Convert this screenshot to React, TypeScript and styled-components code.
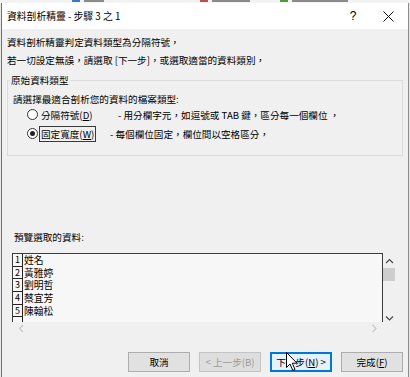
import React from "react";
import styled, { createGlobalStyle } from "styled-components";

const GlobalStyle = createGlobalStyle`
  html, body {
    margin: 0;
    padding: 0;
    background: #e6e6e6;
  }
  body {
    font-family: "Noto Sans CJK TC", "Noto Sans", sans-serif;
    color: #000;
  }
`;

const Screen = styled.div`
  position: relative;
  width: 410px;
  height: 377px;
  overflow: hidden;
  display: flex;
  flex-direction: column;
  background: #e9e9e9;
`;

// bottom edge of the Excel ribbon behind the dialog, only glyph feet show
const Ribbon = styled.div`
  height: 3px;
  display: flex;
  align-items: flex-start;
  background: #f3f3f3;
`;

const RibbonMark = styled.i<{ $left: number; $w: number; $color?: string }>`
  width: ${(p) => p.$w}px;
  height: 2px;
  margin-left: ${(p) => p.$left}px;
  background: ${(p) => p.$color ?? "#8a8a8a"};
`;

const Dialog = styled.div`
  flex: 1;
  display: flex;
  flex-direction: column;
  margin: 0 1px;
  border-left: 1px solid #707070;
  border-right: 1px solid #8a8a8a;
  background: #f0f0f0;
  font-size: 9.6px;
`;

const TitleBar = styled.div`
  height: 26px;
  display: flex;
  align-items: center;
  padding-left: 5px;
  background: #fff;
`;

const Title = styled.span`
  flex: 1;
  font-size: 9.8px;
`;

const CaptionButton = styled.span<{ $w: number }>`
  width: ${(p) => p.$w}px;
  height: 26px;
  display: flex;
  align-items: center;
  justify-content: center;
  font-family: "Liberation Sans", sans-serif;
  font-size: 12px;
`;

const Body = styled.div`
  flex: 1;
  display: flex;
  flex-direction: column;
  padding-top: 4px;
`;

const Line = styled.div`
  padding-left: 5px;
  line-height: 18px;
`;

const Group = styled.fieldset`
  margin: 4px 5px 0 5px;
  padding: 0 0 13px 0;
  min-width: 0;
  border: 1px solid #dcdcdc;
`;

const Legend = styled.legend`
  margin-left: 2px;
  padding: 0 1px;
  line-height: 14px;
`;

const Prompt = styled.div`
  margin-top: 5px;
  padding-left: 5px;
  line-height: 14px;
`;

const RadioRow = styled.div<{ $top: number }>`
  display: flex;
  align-items: center;
  height: 17px;
  margin-top: ${(p) => p.$top}px;
  padding-left: 19px;
`;

const RadioCircle = styled.span<{ $checked?: boolean }>`
  box-sizing: border-box;
  width: 11px;
  height: 11px;
  border: 1px solid #333;
  border-radius: 50%;
  background: #fff;
  display: flex;
  align-items: center;
  justify-content: center;

  &::after {
    content: "";
    width: 5px;
    height: 5px;
    border-radius: 50%;
    background: ${(p) => (p.$checked ? "#222" : "transparent")};
  }
`;

const RadioLabel = styled.span<{ $focused?: boolean }>`
  box-sizing: border-box;
  width: 57px;
  height: 16px;
  margin-left: 1px;
  padding: 0 1px;
  line-height: 14px;
  border: 1px solid ${(p) => (p.$focused ? "#3a3a3a" : "transparent")};
  white-space: nowrap;
`;

const Description = styled.span<{ $gap: number }>`
  margin-left: ${(p) => p.$gap}px;
  white-space: nowrap;
`;

const Key = styled.span`
  text-decoration: underline;
`;

const PreviewLabel = styled.div`
  margin-top: 74px;
  padding-left: 12px;
  line-height: 14px;
`;

const Preview = styled.div`
  margin: 9px 0 0 10px;
  display: grid;
  grid-template-columns: 371px 13px;
  grid-template-rows: 69px 12px;
`;

const Sheet = styled.div`
  border: 1px solid #3c3c3c;
  border-bottom: none;
  background: #f7f7f7;
  overflow: hidden;
`;

const SheetRow = styled.div`
  display: flex;
  height: 12.7px;
`;

const RowNumber = styled.span`
  box-sizing: border-box;
  width: 10px;
  border-right: 1px solid #222;
  border-bottom: 1px solid #222;
  font-size: 9px;
  line-height: 12px;
  text-align: center;
`;

const Cell = styled.span`
  padding-left: 1px;
  font-size: 9.8px;
  line-height: 12.7px;
`;

const VScroll = styled.div`
  display: flex;
  flex-direction: column;
  align-items: center;
  padding-top: 5px;
`;

const Thumb = styled.div`
  width: 12px;
  height: 13px;
  margin: 3px 0 0 -1px;
  background: #cdcdcd;
`;

const Spacer = styled.div`
  flex: 1;
`;

const HScroll = styled.div`
  display: flex;
  justify-content: space-between;
  align-items: center;
  padding: 0 5px 0 6px;
`;

const Footer = styled.div`
  margin-top: auto;
  display: flex;
  justify-content: flex-end;
  gap: 9px;
  padding: 0 5px 5px 0;
`;

const Button = styled.span<{ $variant?: "default" | "disabled" | "hover" }>`
  box-sizing: border-box;
  width: 62px;
  height: 20px;
  display: flex;
  align-items: center;
  justify-content: center;
  border: 1px solid
    ${(p) =>
      p.$variant === "hover" ? "#0078d7" : p.$variant === "disabled" ? "#c4c4c4" : "#adadad"};
  box-shadow: ${(p) => (p.$variant === "hover" ? "inset 0 0 0 1px #0078d7" : "none")};
  background: ${(p) =>
    p.$variant === "hover" ? "#e5f1fb" : p.$variant === "disabled" ? "#dedede" : "#e1e1e1"};
  color: ${(p) => (p.$variant === "disabled" ? "#9a9a9a" : "#000")};
  white-space: nowrap;
`;

const Cursor = styled.svg`
  position: absolute;
  left: 286px;
  top: 352px;
`;

const Chevron = ({ dir, color = "#444" }: { dir: "up" | "down" | "left" | "right"; color?: string }) => {
  const d = {
    up: "M1 5 L4.5 1.5 L8 5",
    down: "M1 1.5 L4.5 5 L8 1.5",
    left: "M5 1 L1.5 4.5 L5 8",
    right: "M1.5 1 L5 4.5 L1.5 8",
  }[dir];
  const vertical = dir === "up" || dir === "down";
  return (
    <svg width={vertical ? 9 : 7} height={vertical ? 7 : 9}>
      <path d={d} fill="none" stroke={color} strokeWidth="1.1" />
    </svg>
  );
};

const names = ["姓名", "黃雅婷", "劉明哲", "蔡宜芳", "陳翰松", ""];

export default function App() {
  return (
    <>
      <GlobalStyle />
      <Screen>
        <Ribbon>
          <RibbonMark $left={72} $w={8} $color="#3a78c4" />
          <RibbonMark $left={4} $w={20} />
          <RibbonMark $left={96} $w={8} $color="#c0504d" />
          <RibbonMark $left={4} $w={38} />
          <RibbonMark $left={30} $w={8} $color="#4f9a3a" />
          <RibbonMark $left={4} $w={56} />
        </Ribbon>
        <Dialog>
          <TitleBar>
            <Title>資料剖析精靈 - 步驟 3 之 1</Title>
            <CaptionButton $w={30}>?</CaptionButton>
            <CaptionButton $w={40}>
              <svg width="11" height="11">
                <path d="M0.5 0.5 L10.5 10.5 M10.5 0.5 L0.5 10.5" stroke="#111" strokeWidth="1" />
              </svg>
            </CaptionButton>
          </TitleBar>
          <Body>
            <Line>資料剖析精靈判定資料類型為分隔符號，</Line>
            <Line>若一切設定無誤，請選取 [下一步]，或選取適當的資料類別，</Line>
            <Group>
              <Legend>原始資料類型</Legend>
              <Prompt>請選擇最適合剖析您的資料的檔案類型:</Prompt>
              <RadioRow $top={0}>
                <RadioCircle />
                <RadioLabel>
                  分隔符號(<Key>D</Key>)
                </RadioLabel>
                <Description $gap={22}>- 用分欄字元，如逗號或 TAB 鍵，區分每一個欄位 ，</Description>
              </RadioRow>
              <RadioRow $top={2}>
                <RadioCircle $checked />
                <RadioLabel $focused>
                  固定寬度(<Key>W</Key>)
                </RadioLabel>
                <Description $gap={14}>- 每個欄位固定，欄位間以空格區分，</Description>
              </RadioRow>
            </Group>
            <PreviewLabel>預覽選取的資料:</PreviewLabel>
            <Preview>
              <Sheet>
                {names.map((name, i) => (
                  <SheetRow key={i}>
                    <RowNumber>{i < 5 ? i + 1 : ""}</RowNumber>
                    <Cell>{name}</Cell>
                  </SheetRow>
                ))}
              </Sheet>
              <VScroll>
                <Chevron dir="up" />
                <Thumb />
                <Spacer />
                <Chevron dir="down" />
              </VScroll>
              <HScroll>
                <Chevron dir="left" color="#c6c6c6" />
                <Chevron dir="right" color="#c6c6c6" />
              </HScroll>
            </Preview>
            <Footer>
              <Button>取消</Button>
              <Button $variant="disabled">&lt; 上一步(B)</Button>
              <Button $variant="hover">
                下一步(<Key>N</Key>) &gt;
              </Button>
              <Button>
                完成(<Key>F</Key>)
              </Button>
            </Footer>
          </Body>
        </Dialog>
        <Cursor width="13" height="20" viewBox="0 0 13 20">
          <path
            d="M0.5 0.5 L0.5 15.5 L4 12 L6.8 18.5 L9 17.5 L6.3 11.2 L11 11.2 Z"
            fill="#fff"
            stroke="#000"
            strokeWidth="1"
            strokeLinejoin="miter"
          />
        </Cursor>
      </Screen>
    </>
  );
}
